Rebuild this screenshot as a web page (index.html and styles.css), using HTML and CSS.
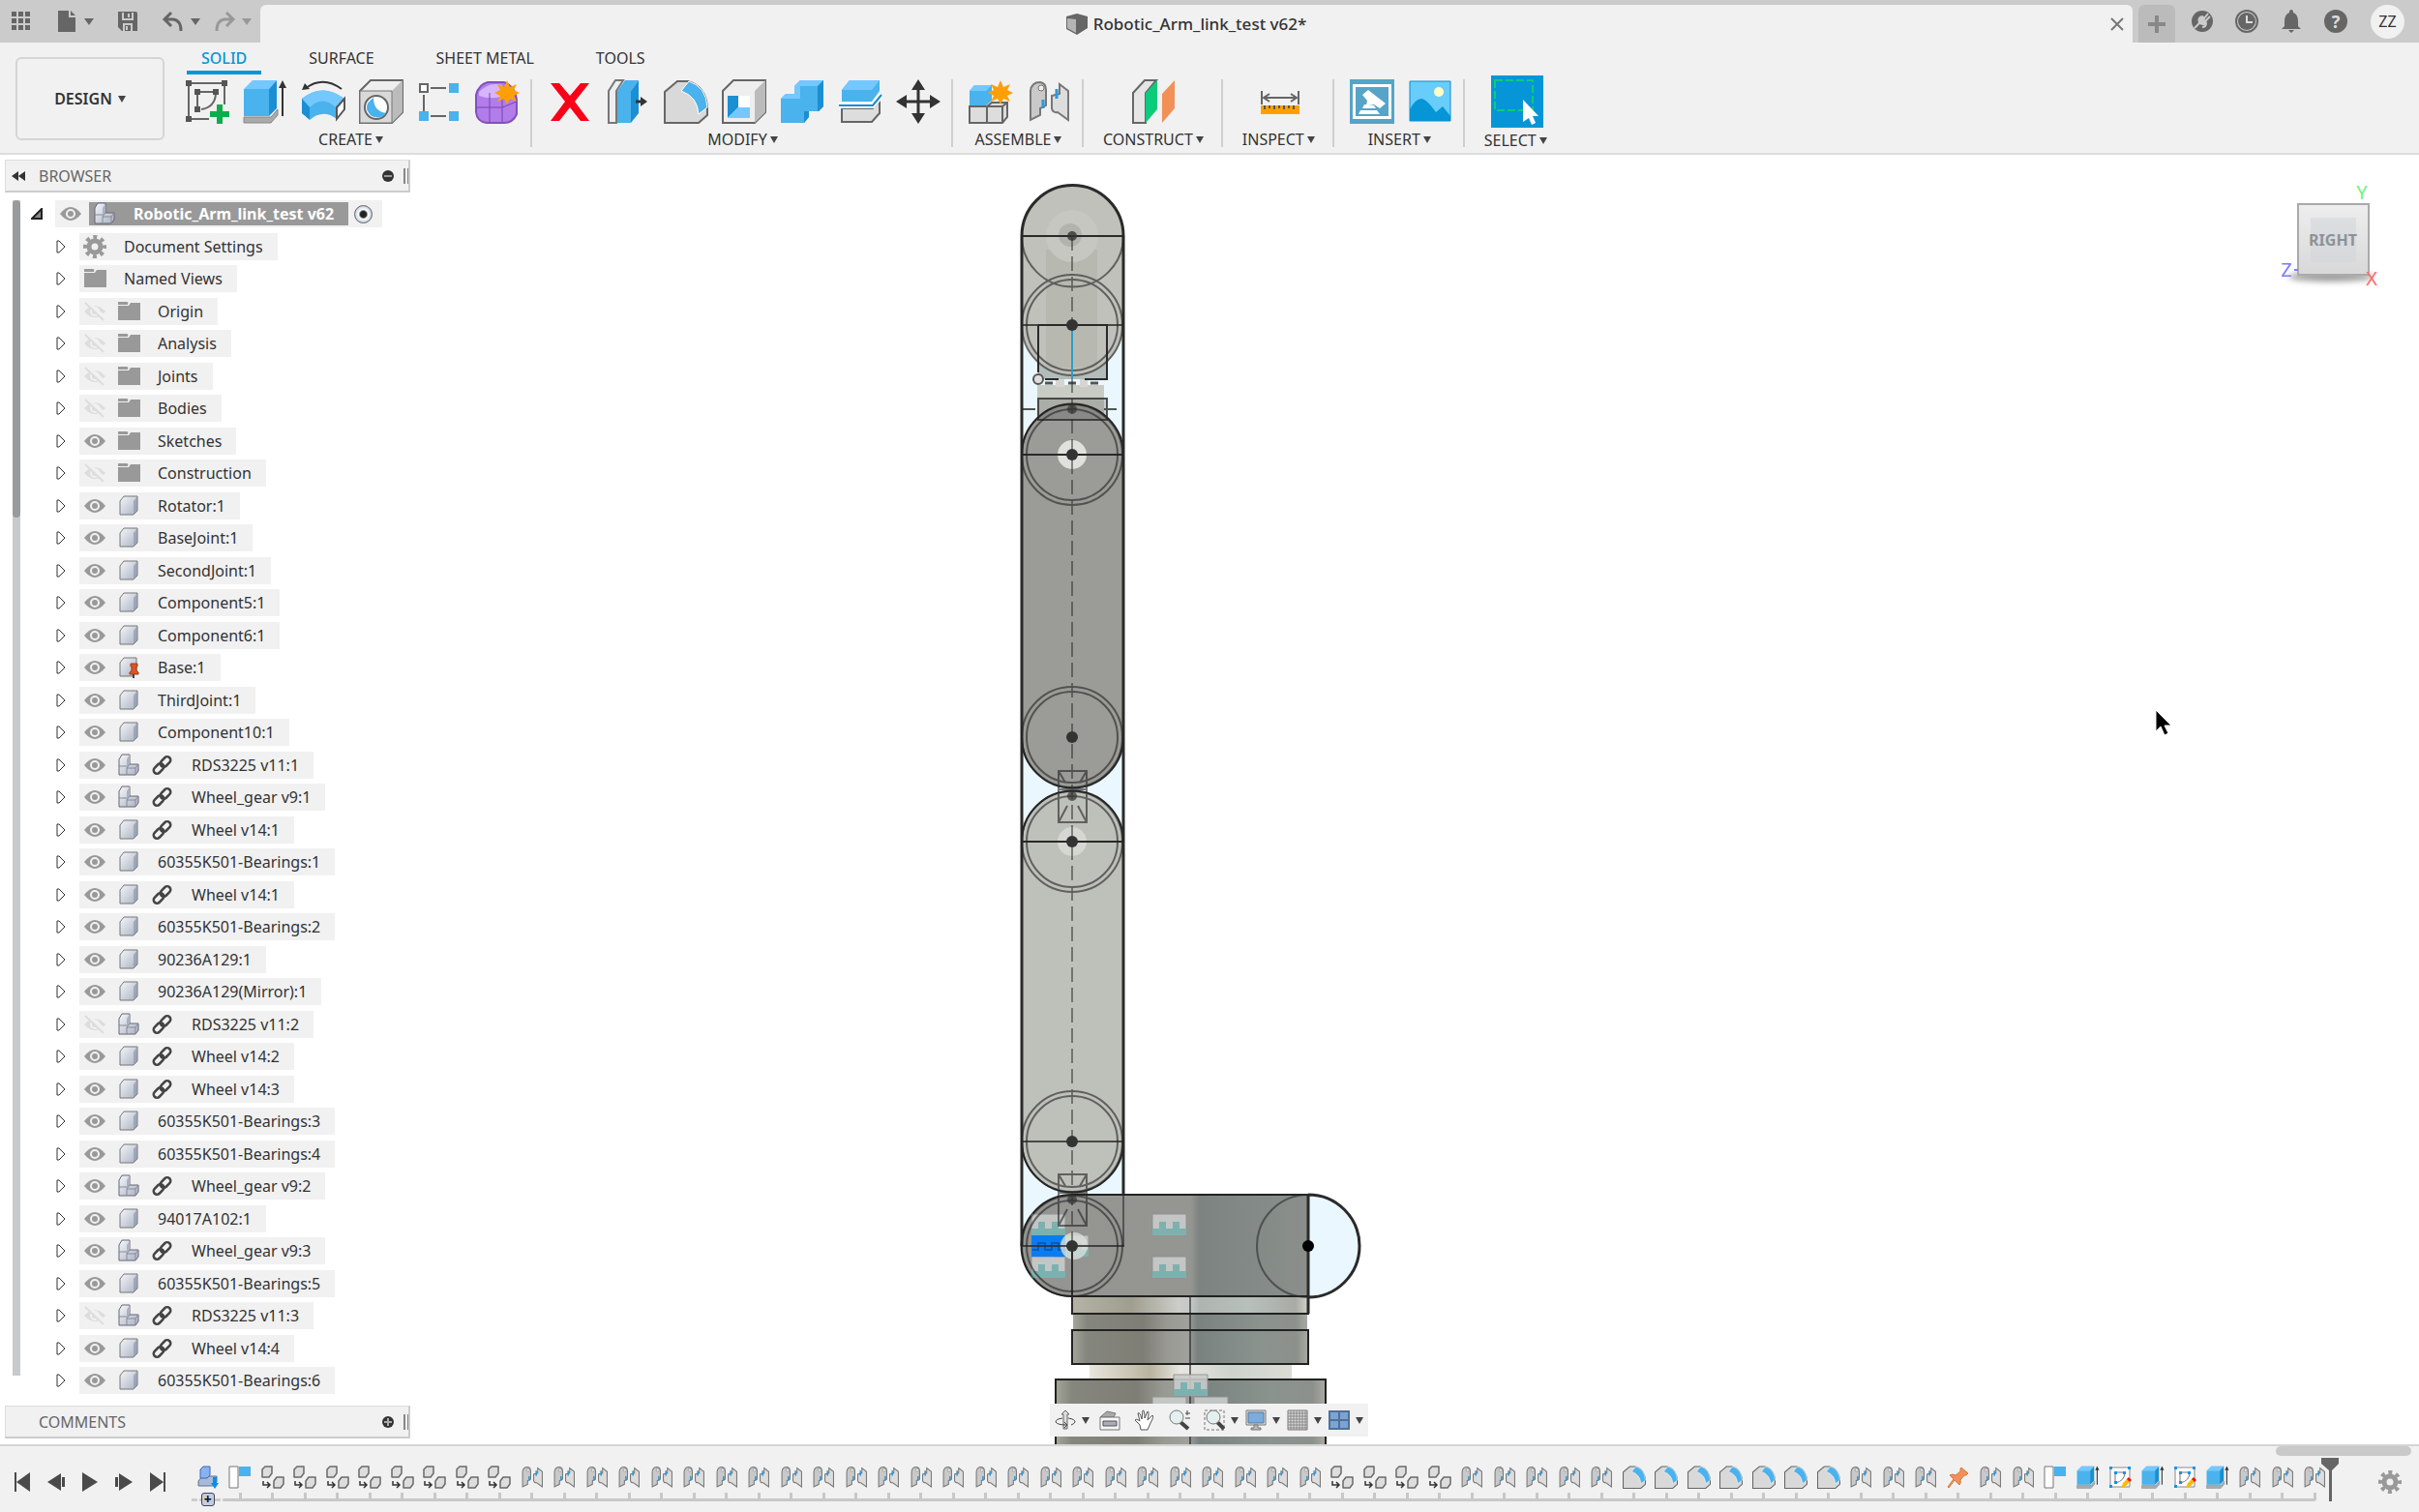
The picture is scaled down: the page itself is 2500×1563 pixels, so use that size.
FILE: index.html
```html
<!DOCTYPE html>
<html lang="en">

<head>
  <meta charset="UTF-8" />
  <meta name="viewport" content="width=device-width, initial-scale=1.0" />
  <title>Robotic_Arm_link_test v62*</title>
  <link rel="stylesheet" href="styles.css">
</head>

<body>
  <!-- shared icons -->
  <svg class="defs" aria-hidden="true">
    <defs>
      <linearGradient id="steel" x1="0" y1="0" x2="1" y2="1">
        <stop offset="0" stop-color="#f4f6f9" />
        <stop offset="1" stop-color="#aab2c3" />
      </linearGradient>
      <linearGradient id="barrel">
        <stop offset="0" stop-color="#a5a699" />
        <stop offset=".06" stop-color="#85867d" />
        <stop offset=".3" stop-color="#7e7e75" />
        <stop offset=".4" stop-color="#989992" />
        <stop offset=".49" stop-color="#a0a19c" />
        <stop offset=".53" stop-color="#7a827f" />
        <stop offset=".8" stop-color="#8b938f" />
        <stop offset=".95" stop-color="#8c908b" />
        <stop offset="1" stop-color="#a9aaa2" />
      </linearGradient>
      <linearGradient id="barrelLight">
        <stop offset="0" stop-color="#b3b2a4" />
        <stop offset=".25" stop-color="#a09e8f" />
        <stop offset=".45" stop-color="#cccdc9" />
        <stop offset=".5" stop-color="#c5c8c9" />
        <stop offset=".54" stop-color="#aeb5b1" />
        <stop offset=".75" stop-color="#b8c0bb" />
        <stop offset=".95" stop-color="#a9aba5" />
        <stop offset="1" stop-color="#cfcfc6" />
      </linearGradient>
      <linearGradient id="neck">
        <stop offset="0" stop-color="#e9e5dc" />
        <stop offset=".3" stop-color="#b9b39f" />
        <stop offset=".45" stop-color="#e8e6e1" />
        <stop offset=".7" stop-color="#cdd3cd" />
        <stop offset="1" stop-color="#dcdcd6" />
      </linearGradient>
      <linearGradient id="shoulder">
        <stop offset="0" stop-color="#949592" />
        <stop offset=".59" stop-color="#959691" />
        <stop offset=".62" stop-color="#7c8381" />
        <stop offset=".9" stop-color="#868d89" />
        <stop offset="1" stop-color="#8b8e8a" />
      </linearGradient>
      <linearGradient id="cubeFace" x1="0" y1="0" x2="0" y2="1">
        <stop offset="0" stop-color="#eeeeee" />
        <stop offset="1" stop-color="#d8d8d8" />
      </linearGradient>
      <filter id="soft" x="-20%" y="-80%" width="140%" height="260%">
        <feGaussianBlur stdDeviation="3" />
      </filter>
    </defs>

    <symbol id="i-eye" viewBox="0 0 24 24">
      <path d="M1 12Q12 -2 23 12Q12 26 1 12Z" fill="#999" />
      <circle cx="12" cy="12" r="4" fill="none" stroke="#f1f1f1" stroke-width="2" />
    </symbol>
    <symbol id="i-hidden" viewBox="0 0 24 24">
      <path d="M1 12Q12 0 23 12Q12 24 1 12Z" fill="#ddd" />
      <circle cx="12" cy="12" r="4" fill="none" stroke="#f1f1f1" stroke-width="2" />
      <path d="M4 2L24 20" stroke="#f1f1f1" stroke-width="4" />
      <path d="M2 3L21 21" stroke="#ddd" stroke-width="2" />
    </symbol>
    <symbol id="i-folder" viewBox="0 0 24 24">
      <path d="M1 2h9q2 0 1 3H1ZM1 6h11l2-3h10v18H1Z" fill="#999" />
    </symbol>
    <symbol id="i-gear" viewBox="0 0 24 24">
      <circle cx="12" cy="12" r="10" fill="none" stroke="#999" stroke-width="4" stroke-dasharray="4 3.85" stroke-dashoffset="2" />
      <circle cx="12" cy="12" r="6" fill="none" stroke="#999" stroke-width="5" />
    </symbol>
    <symbol id="i-body" viewBox="0 0 24 24">
      <path d="M3 7L7 2H21V17L17 21H3Z" fill="url(#steel)" stroke="#777" stroke-linejoin="round" />
      <path d="M17 7L21 2V17L17 21Z" fill="#8f99ab" opacity=".7" />
    </symbol>
    <symbol id="i-assembly" viewBox="0 0 24 24">
      <path d="M2 6L5 1H13V11H22V18L19 22H2Z" fill="url(#steel)" stroke="#667" stroke-linejoin="round" />
      <path d="M10 6L13 1V11L10 15Z" fill="#aab2c3" />
      <path d="M2 13H10M10 22V15L13 11M10 15H19L22 11M19 15V22" fill="none" stroke="#889" />
    </symbol>
    <symbol id="i-pinned" viewBox="0 0 24 24">
      <path d="M3 7L7 2H20V17L16 21H3Z" fill="url(#steel)" stroke="#777" />
      <path d="M14 8h7v3h-1v4l2 2v2h-9v-2l2-2v-4h-1Z" fill="#d9542a" stroke="#a63a18" />
      <path d="M17 19v4" stroke="#444" stroke-width="2" />
    </symbol>
    <symbol id="i-link" viewBox="0 0 24 24">
      <g fill="none" stroke="#444" stroke-width="2.5">
        <rect x="9" y="5" width="12" height="7" rx="3.5" transform="rotate(-45 15 8.5)" />
        <rect x="2" y="12" width="12" height="7" rx="3.5" transform="rotate(-45 8 15.5)" />
      </g>
    </symbol>

    <!-- timeline and toolbar features -->
    <symbol id="i-import" viewBox="0 0 24 24">
      <path d="M2 16L6 11H21V17L17 21H2Z" fill="#a8bad8" stroke="#5f7391" />
      <path d="M4 4L7 1H14V10L11 13H4Z" fill="#8ab2ef" stroke="#3e68b0" />
      <path d="M17 12h4v6h2l-4 6l-4-6h2Z" fill="#0a8cf0" />
    </symbol>
    <symbol id="i-flag" viewBox="0 0 24 24">
      <path d="M1 1H10V23H1Z" fill="#fff" stroke="#777" />
      <path d="M11 1H23V11H11Z" fill="#4ab2ec" />
    </symbol>
    <symbol id="i-pattern" viewBox="0 0 24 24">
      <path d="M1 4L4 1H11V8L8 12H1ZM13 16L16 12H23V19L20 23H13Z" fill="#ddd" stroke="#6a6a6a" stroke-width="1.5" stroke-linejoin="round" />
      <path d="M2 16V20H8M6 17L9 20L6 23" fill="none" stroke="#333" stroke-width="1.5" />
    </symbol>
    <symbol id="i-joint" viewBox="0 0 46 46">
      <path d="M4 42V12Q5 3 14 3Q20 4 20 11V27L14 30V37Z" fill="#c9c9c9" stroke="#777" stroke-width="2" />
      <path d="M43 42V12L34 5V15L26 17V30Q27 35 32 34Z" fill="#ddd" stroke="#777" stroke-width="2" />
      <circle cx="15" cy="9" r="3" fill="#eee" stroke="#777" />
      <path d="M17 30V21M31 20V10" stroke="#2a98e0" stroke-width="3" />
    </symbol>
    <symbol id="i-fillet" viewBox="0 0 46 46">
      <path d="M1 45V13L14 2H25Q44 8 45 30V37L36 45Z" fill="#d9d9d9" stroke="#666" stroke-width="2" />
      <path d="M18 12L26 2Q44 8 45 29L36 36Q35 18 18 12Z" fill="#4ab2ec" stroke="#fff" />
    </symbol>
    <symbol id="i-extrude" viewBox="0 0 46 46">
      <path d="M1 39H29L36 31V37L29 45H1Z" fill="#aaa" stroke="#888" />
      <path d="M1 10L10 1H35L27 10Z" fill="#74c8ff" />
      <path d="M1 10H27V38H1Z" fill="#4ab2ec" />
      <path d="M27 10L35 1V30L27 38Z" fill="#1a8fd3" />
      <path d="M41 38V6" stroke="#333" stroke-width="2" />
      <path d="M37 9L41 1L45 9Z" fill="#333" />
    </symbol>
    <symbol id="i-sketchedit" viewBox="0 0 24 24">
      <path d="M2 2H22V22H2Z" fill="#fff" stroke="#888" />
      <path d="M7 7H17Q17 16 7 18Z" fill="none" stroke="#777" />
      <path d="M1 1h3v3H1ZM20 1h3v3h-3ZM1 20h3v3H1ZM6 6h3v3H6ZM15 6h3v3h-3ZM6 16h3v3H6Z" fill="#0a96ef" />
      <path d="M13 23L15 18L20 13L23 16L17 22Z" fill="#fbb917" />
      <path d="M19 14L21 12L24 15L22 17Z" fill="#e11" />
    </symbol>
    <symbol id="i-pin" viewBox="0 0 24 24">
      <path d="M15 2L22 8L20 10H18L14 15Q15 18 13 20L8 15L2 23L1 22L7 14L3 10Q6 8 9 10L14 6V3Z" fill="#f19157" stroke="#d57a42" />
    </symbol>
  </svg>

  <header class="titlebar">
    <div class="quick">
      <button aria-label="Data panel"><svg width="24" height="24" viewBox="0 0 24 24"><path d="M2 2h5v5H2ZM9 2h5v5H9ZM16 2h5v5h-5ZM2 9h5v5H2ZM9 9h5v5H9ZM16 9h5v5h-5ZM2 16h5v5H2ZM9 16h5v5H9ZM16 16h5v5h-5Z" fill="#666" /></svg></button>
      <button class="drop" aria-label="File"><svg width="24" height="24" viewBox="0 0 24 24"><path d="M3 1H14V8H21V23H3ZM16 1L21 6H16Z" fill="#666" /></svg><i class="caret"></i></button>
      <button aria-label="Save"><svg width="24" height="24" viewBox="0 0 24 24"><path d="M2 2H20Q22 2 22 4V22H6L2 18Z" fill="#666" /><path d="M7 3V10H17V3M8 22V15H16V22M13 4V8M11 17V21" fill="none" stroke="#cbcbcb" stroke-width="2" /></svg></button>
      <button class="drop" aria-label="Undo"><svg width="24" height="24" viewBox="0 0 24 24"><path d="M10 3L3 10L10 17M4 10H12Q20 11 20 22" fill="none" stroke="#666" stroke-width="3" /></svg><i class="caret"></i></button>
      <button class="drop faded" aria-label="Redo"><svg width="24" height="24" viewBox="0 0 24 24"><path d="M14 3L21 10L14 17M20 10H12Q4 11 4 22" fill="none" stroke="#666" stroke-width="3" /></svg><i class="caret"></i></button>
    </div>
    <div class="doc-tab">
      <svg width="24" height="24" viewBox="0 0 24 24"><path d="M1 4L12 1L23 4V16L12 23L1 17Z" fill="#666" /><path d="M2 6L11 7V21L2 16Z" fill="#b5b5b5" /></svg>
      <span>Robotic_Arm_link_test v62*</span>
      <button class="close" aria-label="Close tab"><svg width="14" height="14" viewBox="0 0 14 14"><path d="M1 1L13 13M13 1L1 13" stroke="#777" stroke-width="2" /></svg></button>
    </div>
    <button class="new-tab" aria-label="New tab"><svg width="18" height="18" viewBox="0 0 18 18"><path d="M9 0V18M0 9H18" stroke="#888" stroke-width="4" /></svg></button>
    <nav class="account">
      <button aria-label="Extensions"><svg width="24" height="24" viewBox="0 0 24 24"><circle cx="12" cy="12" r="11" fill="#666" /><path d="M4 19L9 14Q7 8 12 7L14 9L18 4M15 12L20 7M12 18Q16 18 16 14" fill="none" stroke="#cbcbcb" stroke-width="2" /><path d="M9 15Q7 8 12 7L17 13Q16 18 9 15Z" fill="#cbcbcb" /></svg></button>
      <button aria-label="Job status"><svg width="24" height="24" viewBox="0 0 24 24"><circle cx="12" cy="12" r="11" fill="none" stroke="#666" stroke-width="2" /><circle cx="12" cy="12" r="9" fill="#666" /><path d="M12 6V13H18" fill="none" stroke="#ddd" stroke-width="2" /></svg></button>
      <button aria-label="Notifications"><svg width="24" height="24" viewBox="0 0 24 24"><path d="M12 0Q14 0 14 3Q19 5 19 12V17L22 20H2L5 17V12Q5 5 10 3Q10 0 12 0ZM9 21H15L12 24Z" fill="#666" /></svg></button>
      <button class="help" aria-label="Help">?</button>
      <button class="avatar">ZZ</button>
    </nav>
  </header>

  <section class="ribbon">
    <button class="workspace">DESIGN<i class="caret"></i></button>
    <div class="ribbon-body">
      <nav class="tabs">
        <a href="#" class="active">SOLID</a>
        <a href="#">SURFACE</a>
        <a href="#">SHEET METAL</a>
        <a href="#">TOOLS</a>
      </nav>
      <div class="groups">
        <div class="group">
          <div class="tools">
            <button aria-label="Create sketch"><svg viewBox="0 0 46 46"><path d="M7 4H38M4 7V38M41 7V26M7 41H25M12 13H32M13 16V28M32 15Q31 29 17 31" fill="none" stroke="#666" stroke-width="2" /><path d="M1 1h6v6H1ZM38 1h6v6h-6ZM1 38h6v6H1ZM10 10h6v6h-6ZM29 10h6v6h-6ZM10 28h6v6h-6Z" fill="#555" /><path d="M36 26V46M26 36H46" stroke="#0cae4b" stroke-width="6" /></svg></button>
            <button aria-label="Extrude"><svg><use href="#i-extrude" /></svg></button>
            <button aria-label="Revolve"><svg viewBox="0 0 46 46"><path d="M1 20Q22 3 45 20L36 30Q22 20 10 41L1 35Z" fill="#4ab2ec" /><path d="M9 29Q23 16 37 29V41Q23 30 9 42Z" fill="#4ab2ec" /><path d="M1 20Q22 3 45 20L36 29Q22 16 9 29Z" fill="#74c8ff" /><path d="M45 20V31L37 41V29Z" fill="#fff" stroke="#555" stroke-width="2" /><path d="M1 20L9 29V42L1 35Z" fill="#1a8fd3" /><path d="M42 10Q23 -4 5 9" fill="none" stroke="#333" stroke-width="2" /><path d="M1 11L4 4L9 10Z" fill="#333" /></svg></button>
            <button aria-label="Hole"><svg viewBox="0 0 46 46"><path d="M1 12L12 1H45V34L34 45H1Z" fill="#eee" stroke="#666" stroke-width="2" /><path d="M34 12L45 1V34L34 45Z" fill="#bbb" /><path d="M1 12H34V45H1Z" fill="#d9d9d9" stroke="#777" /><circle cx="18" cy="29" r="12" fill="#fff" stroke="#666" stroke-width="2" /><path d="M15 19Q15 33 28 35Q22 42 13 38Q2 28 15 19Z" fill="#4ab2ec" /></svg></button>
            <button aria-label="Pattern"><svg viewBox="0 0 46 46"><path d="M14 9H30M7 16V34M14 38H30" stroke="#666" stroke-width="2" /><path d="M3 5h8v8H3Z" fill="#fff" stroke="#666" stroke-width="2" /><path d="M33 4h10v10H33ZM2 33h10v10H2ZM33 33h10v10H33Z" fill="#4ab2ec" /></svg></button>
            <button aria-label="Create form"><svg viewBox="0 0 46 46"><path d="M1 16Q4 5 13 3H30Q42 8 43 22V36Q39 45 30 45H12Q2 44 1 34Z" fill="#b27de9" stroke="#8050c0" stroke-width="2" /><path d="M4 13Q16 2 28 6L27 18Q15 21 4 17Z" fill="#d7b5fb" /><path d="M1 29H28L43 23M15 14V45M28 18V44" fill="none" stroke="#7745b8" /><path d="M33 1L36 8L43 5L40 11L46 14L40 17L43 23L36 20L33 26L30 20L23 23L26 17L20 14L26 11L23 5L30 8Z" fill="#ff9f06" /></svg></button>
          </div>
          <button class="group-name">CREATE<i class="caret"></i></button>
        </div>
        <div class="group">
          <div class="tools">
            <button aria-label="Delete"><svg viewBox="0 0 46 46"><path d="M3 4H12L23 17L34 4H43L28 23L43 43H34L23 29L12 43H3L18 23Z" fill="#fa0019" /></svg></button>
            <button aria-label="Press pull"><svg viewBox="0 0 46 46"><path d="M3 12L10 1H18L11 12V45H3Z" fill="#eee" stroke="#777" stroke-width="2" /><path d="M12 12L20 1H34L26 12V45H12Z" fill="#4ab2ec" /><path d="M26 12L34 1V35L26 45Z" fill="#1a8fd3" /><path d="M31 23H38" stroke="#333" stroke-width="3" /><path d="M36 18L43 23L36 28Z" fill="#333" /></svg></button>
            <button aria-label="Fillet"><svg><use href="#i-fillet" /></svg></button>
            <button aria-label="Shell"><svg viewBox="0 0 46 46"><path d="M1 12L12 1H45V34L34 45H1Z" fill="#eee" stroke="#666" stroke-width="2" /><path d="M34 12L45 1V34L34 45Z" fill="#bbb" /><path d="M6 17H29V40H6Z" fill="#fff" /><path d="M6 17H17V29L6 40Z" fill="#1a8fd3" /><path d="M6 40L17 29H29V40Z" fill="#74c8ff" /></svg></button>
            <button aria-label="Combine"><svg viewBox="0 0 46 46"><path d="M1 20L6 15H15V7L21 1H45V28L40 33H30V39L25 45H1Z" fill="#4ab2ec" /><path d="M1 20L6 15H15V7L21 1H45L39 7H21V20Z" fill="#74c8ff" /><path d="M39 7L45 1V28L40 33H30V39L25 45V33H39Z" fill="#1a8fd3" /></svg></button>
            <button aria-label="Split body"><svg viewBox="0 0 46 46"><path d="M4 30H36L43 22V35L35 44H4Z" fill="#ddd" stroke="#666" stroke-width="2" /><path d="M4 11L12 1H43V12L35 23H4Z" fill="#4ab2ec" /><path d="M4 11L12 1H43L35 11Z" fill="#74c8ff" /><path d="M1 27H36L45 16" fill="none" stroke="#fff" stroke-width="6" /><path d="M1 27H36L45 16" fill="none" stroke="#128bd8" stroke-width="2" /></svg></button>
            <button aria-label="Move"><svg viewBox="0 0 46 46"><path d="M23 7V39M7 23H39" stroke="#333" stroke-width="3" /><path d="M23 0L30 11H16ZM23 46L30 35H16ZM0 23L11 16V30ZM46 23L35 16V30Z" fill="#333" /></svg></button>
          </div>
          <button class="group-name">MODIFY<i class="caret"></i></button>
        </div>
        <div class="group">
          <div class="tools">
            <button aria-label="New component"><svg viewBox="0 0 46 46"><path d="M1 28H19V45H1ZM19 28L24 24H40V39L35 45H19Z" fill="#ddd" stroke="#666" stroke-width="2" /><path d="M35 28V45M19 28H35L40 24" fill="none" stroke="#666" stroke-width="2" /><path d="M1 12L6 6H24V22L18 27H1Z" fill="#4ab2ec" /><path d="M1 12L6 6H24L18 12Z" fill="#74c8ff" /><path d="M33 1L36 8L43 5L40 11L46 14L40 17L43 23L36 20L33 26L30 20L23 23L26 17L20 14L26 11L23 5L30 8Z" fill="#ff9f06" /></svg></button>
            <button aria-label="Joint"><svg><use href="#i-joint" /></svg></button>
          </div>
          <button class="group-name">ASSEMBLE<i class="caret"></i></button>
        </div>
        <div class="group">
          <div class="tools">
            <button aria-label="Offset plane"><svg viewBox="0 0 46 46"><path d="M1 14L13 1H25L14 14V45H1Z" fill="#e5e5e5" stroke="#666" stroke-width="2" /><path d="M14 14L26 1V31L14 45Z" fill="#0ccc7c" /><path d="M31 15L44 1V30L31 45Z" fill="#f19157" /></svg></button>
          </div>
          <button class="group-name">CONSTRUCT<i class="caret"></i></button>
        </div>
        <div class="group">
          <div class="tools">
            <button aria-label="Measure"><svg viewBox="0 0 46 46"><path d="M4 12V26M42 12V26M7 19H39M12 15L6 19L12 23M34 15L40 19L34 23" fill="none" stroke="#666" stroke-width="2" /><path d="M3 27H43V36H3Z" fill="#ffa000" /><path d="M7 27v4M12 27v3M17 27v4M22 27v3M27 27v4M32 27v3M37 27v4" stroke="#555" stroke-width="2" /></svg></button>
          </div>
          <button class="group-name">INSPECT<i class="caret"></i></button>
        </div>
        <div class="group">
          <div class="tools">
            <button aria-label="Insert derive"><svg viewBox="0 0 46 46"><path d="M0 0H46V46H0Z" fill="#56a4c8" /><path d="M3 5H43V41H3Z" fill="#fff" /><path d="M6 8H40V38H6Z" fill="#56a4c8" /><path d="M13 16L19 11L37 25L31 30L25 26L17 27L18 22ZM15 26L25 27L27 30H13ZM11 32H28L31 36H9Z" fill="#fff" /></svg></button>
            <button aria-label="Canvas"><svg viewBox="0 0 46 46"><path d="M2 2H44V43H2Z" fill="#69cdfb" /><path d="M2 31Q8 20 14 20Q19 20 29 34L36 28L44 38V43H2Z" fill="#0696d7" /><circle cx="32" cy="13" r="5" fill="#ffffc5" /><path d="M2 2H44V43H2Z" fill="none" stroke="#0b8ed0" /></svg></button>
          </div>
          <button class="group-name">INSERT<i class="caret"></i></button>
        </div>
        <div class="group">
          <div class="tools">
            <button class="selected" aria-label="Select"><svg viewBox="0 0 54 54"><path d="M4 5H43V36H4Z" fill="none" stroke="#0bcb7d" stroke-width="2" stroke-dasharray="8 3" /><path d="M33 25V48L39 44L42 51L46 49L43 42H49Z" fill="#fff" /></svg></button>
          </div>
          <button class="group-name">SELECT<i class="caret"></i></button>
        </div>
      </div>
    </div>
  </section>

  <main class="viewport">
    <svg class="model" viewBox="0 160 2500 1333" preserveAspectRatio="xMidYMin meet">
      <!-- base -->
      <path d="M1091 1426H1370V1493H1091Z" fill="url(#barrel)" />
      <path d="M1126 1411H1335V1427H1126Z" fill="url(#neck)" />
      <path d="M1109 1340H1351V1358H1109Z" fill="url(#barrelLight)" />
      <path d="M1109 1358H1351V1375H1109Z" fill="url(#barrel)" />
      <path d="M1108 1375H1352V1411H1108Z" fill="url(#barrel)" />
      <g fill="none" stroke="#222" stroke-width="2">
        <path d="M1091 1493V1426H1370V1493M1108 1340V1358H1352V1340M1108 1375H1352V1410H1108Z" />
        <path d="M1230 1340V1493" opacity=".6" />
      </g>

      <!-- sketch profiles -->
      <path d="M1056 336H1161V470H1056ZM1056 762H1161V870H1056ZM1056 1180H1161V1288H1056Z" fill="#eaf7fe" />
      <circle cx="1352" cy="1288" r="53" fill="#eaf7fe" />
      <path d="M1108 1235H1352V1340H1108A52 52 0 0 1 1108 1235Z" fill="url(#shoulder)" stroke="#222" stroke-width="2" />

      <!-- servo between the wrist links -->
      <path d="M1073 350H1144V392H1073Z" fill="#b3bcba" />
      <path d="M1072 398H1141V434H1072Z" fill="#c9ccc4" />
      <path d="M1091 392H1100V400H1091ZM1116 392H1124V400H1116Z" fill="#d5d6d2" />
      <path d="M1080 396H1088M1104 396H1112M1127 396H1135" stroke="#555" stroke-width="3" />

      <!-- links -->
      <path d="M1056 244A52 52 0 0 1 1161 244V336A52 52 0 0 1 1056 336Z" fill="#c0c1ba" />
      <path d="M1081 258H1134V380H1081Z" fill="#b4b5ae" opacity=".7" />
      <circle cx="1108" cy="244" r="27" fill="#c6c7c1" />
      <circle cx="1106" cy="243" r="12" fill="#b2b3ac" />
      <path d="M1056 470A52 52 0 0 1 1161 470V762A52 52 0 0 1 1056 762Z" fill="#9b9c97" />
      <path d="M1056 870A52 52 0 0 1 1161 870V1180A52 52 0 0 1 1056 1180Z" fill="#bec0ba" />
      <path d="M1073 412H1144V434H1073Z" fill="#555" opacity=".25" />
      <g fill="#e0e1dd">
        <circle cx="1108" cy="470" r="15" />
        <circle cx="1108" cy="870" r="15" opacity=".7" />
      </g>

      <!-- joint glyphs -->
      <g id="joints"></g>
      <circle cx="1110" cy="1288" r="14" fill="#d9dedb" opacity=".8" />

      <!-- edges -->
      <g fill="none" stroke="#2a2a2a" stroke-width="2">
        <path d="M1056 1288V244A52 52 0 0 1 1161 244V1235" stroke-width="3" />
        <path d="M1161 1235V1288" opacity=".6" />
        <path d="M1056 470A52 52 0 0 1 1161 470M1056 762A52 52 0 0 0 1161 762M1056 870A52 52 0 0 1 1161 870M1056 1180A52 52 0 0 0 1161 1180" />
        <path d="M1056 244H1161M1056 470H1161M1056 870H1161" />
        <path d="M1055 336H1162M1055 1180H1162M1055 1288H1162" opacity=".8" />
        <path d="M1073 336H1144V392H1121M1073 336V385M1080 392H1094" />
        <path d="M1073 412H1144V434H1073ZM1057 423H1070M1141 423H1154" opacity=".8" />
        <path d="M1352 1235V1358M1352 1235A53 53 0 0 1 1352 1341" stroke-width="3" />
        <path d="M1352 1235A53 53 0 0 0 1352 1341" opacity=".6" />
        <path d="M1108 1288V1358" />
      </g>
      <g fill="none" stroke="#222" stroke-width="2" opacity=".6">
        <path d="M1056 244A52 52 0 0 0 1161 244" />
        <circle cx="1108" cy="336" r="52" /><circle cx="1108" cy="336" r="47" />
        <circle cx="1108" cy="470" r="52" /><circle cx="1108" cy="470" r="47" />
        <circle cx="1108" cy="762" r="52" /><circle cx="1108" cy="762" r="47" />
        <circle cx="1108" cy="870" r="52" /><circle cx="1108" cy="870" r="47" />
        <circle cx="1108" cy="1180" r="52" /><circle cx="1108" cy="1180" r="47" />
        <circle cx="1108" cy="1288" r="52" /><circle cx="1108" cy="1288" r="47" />
        <path d="M1094 797H1123V850H1094ZM1094 797L1101 809M1123 797L1116 809M1094 850L1103 833M1123 850L1114 833M1094 816H1123" />
        <path d="M1094 1214H1123V1267H1094ZM1094 1214L1101 1226M1123 1214L1116 1226M1094 1267L1103 1250M1123 1267L1114 1250M1094 1233H1123" />
        <path d="M1108 244V1288" stroke-dasharray="15 6" opacity=".8" />
      </g>
      <path d="M1108 342V392" stroke="#2b9fc4" stroke-width="2" />
      <g fill="#333">
        <circle cx="1108" cy="244" r="5" opacity=".8" />
        <circle cx="1108" cy="336" r="6" />
        <circle cx="1108" cy="423" r="5" opacity=".7" />
        <circle cx="1108" cy="470" r="6" />
        <circle cx="1108" cy="762" r="6" />
        <circle cx="1108" cy="823" r="5" opacity=".7" />
        <circle cx="1108" cy="870" r="6" />
        <circle cx="1108" cy="1180" r="6" />
        <circle cx="1108" cy="1240" r="5" opacity=".7" />
        <circle cx="1108" cy="1288" r="6" />
        <circle cx="1352" cy="1288" r="6" fill="#000" />
      </g>
      <circle cx="1073" cy="392" r="5" fill="#ddd" stroke="#555" stroke-width="2" />

      <!-- view cube -->
      <ellipse cx="2409" cy="286" rx="44" ry="5" fill="#999" filter="url(#soft)" />
      <path d="M2375 211H2448V284H2375Z" fill="url(#cubeFace)" stroke="#aaa" stroke-width="2" />
      <path d="M2388 225H2435V271H2388Z" fill="#d3d6da" opacity=".6" />
      <text class="cube-label" x="2411" y="254">RIGHT</text>
      <text class="axis-y" x="2441" y="206">Y</text>
      <text class="axis-z" x="2363" y="286">Z</text>
      <text class="axis-x" x="2451" y="295">X</text>
      <path d="M2371 279H2375" stroke="#8080ff" stroke-width="2" />

      <!-- pointer -->
      <path d="M2228 734V756L2233 751L2237 760L2241 758L2237 750H2244Z" fill="#000" stroke="#fff" />
    </svg>

    <aside class="browser">
      <div class="panel-head">
        <button aria-label="Collapse"><svg width="14" height="10" viewBox="0 0 14 10"><path d="M7 0V10L0 5ZM14 0V10L7 5Z" fill="#333" /></svg></button>
        <h2>BROWSER</h2>
        <button aria-label="Hide"><svg width="12" height="12" viewBox="0 0 12 12"><circle cx="6" cy="6" r="6" fill="#333" /><path d="M2 6H10" stroke="#999" stroke-width="2" /></svg></button>
        <i class="grip"></i>
      </div>
      <div class="tree-wrap">
        <div class="scroll"><div class="thumb"></div></div>
        <ul class="tree" id="tree">
          <li class="root">
            <button class="twist" aria-label="Collapse root"><svg width="12" height="12" viewBox="0 0 12 12"><path d="M1 11H11V1Z" fill="#888" stroke="#222" stroke-width="2" /></svg></button>
            <div class="tile">
              <svg class="ico"><use href="#i-eye" /></svg>
              <span class="root-name"><svg class="ico"><use href="#i-assembly" /></svg>Robotic_Arm_link_test v62</span>
              <input type="radio" name="activate" aria-label="Activate component" checked />
            </div>
          </li>
        </ul>
      </div>
      <div class="panel-head comments">
        <h2>COMMENTS</h2>
        <button aria-label="Show"><svg width="12" height="12" viewBox="0 0 12 12"><circle cx="6" cy="6" r="6" fill="#333" /><path d="M2 6H10M6 2V10" stroke="#aaa" stroke-width="2" /></svg></button>
        <i class="grip"></i>
      </div>
    </aside>

    <div class="navbar">
      <button class="drop" aria-label="Orbit"><svg viewBox="0 0 22 22"><path d="M11 1L15 5H13V20H9V5H7Z" fill="#ddd" stroke="#666" /><path d="M8 9Q1 10 1 13Q3 16 12 16M14 9Q21 10 21 13Q20 15 17 16M10 13L13 16L10 19" fill="none" stroke="#444" /></svg><i class="caret"></i></button>
      <button aria-label="Look at"><svg viewBox="0 0 22 22"><path d="M1 8L8 2L17 4L15 8Z" fill="#aaa" stroke="#777" /><path d="M1 8H21V21H1Z" fill="#f6f6f6" stroke="#777" /><path d="M4 12H18V17H4Z" fill="#a9adb8" stroke="#555" /></svg></button>
      <button aria-label="Pan"><svg viewBox="0 0 22 22"><path d="M7 21L6 16L1 11Q2 9 6 12L4 4Q6 2 8 10L9 1Q11 0 11 9L14 2Q16 2 14 11L19 6Q21 7 17 14L14 21Z" fill="#fff" stroke="#555" /></svg></button>
      <button aria-label="Zoom"><svg viewBox="0 0 22 22"><path d="M12 13L20 20" stroke="#444" stroke-width="4" /><circle cx="8" cy="8" r="7" fill="#e4efef" stroke="#777" /><path d="M17 4H22M19 1V6M17 9H22" stroke="#444" /></svg></button>
      <button class="drop" aria-label="Fit"><svg viewBox="0 0 22 22"><path d="M1 1H21V21H1Z" fill="none" stroke="#777" stroke-dasharray="3 2" /><path d="M14 13L21 20" stroke="#444" stroke-width="4" /><circle cx="10" cy="8" r="7" fill="#e4efef" stroke="#777" /></svg><i class="caret"></i></button>
      <button class="drop" aria-label="Display settings"><svg viewBox="0 0 22 22"><path d="M1 1H21V16H1Z" fill="#e2e2e2" stroke="#777" /><path d="M3 3H19V14H3Z" fill="#7cacdb" stroke="#55779b" /><path d="M9 16H13V19H16V21H6V19H9Z" fill="#bbb" stroke="#777" /></svg><i class="caret"></i></button>
      <button class="drop" aria-label="Grid and snaps"><svg viewBox="0 0 22 22"><path d="M1 1H21V21H1Z" fill="#ddd" stroke="#777" /><path d="M4 1V21M7 1V21M10 1V21M13 1V21M16 1V21M19 1V21M1 4H21M1 7H21M1 10H21M1 13H21M1 16H21M1 19H21" stroke="#888" /></svg><i class="caret"></i></button>
      <button class="drop" aria-label="Viewports"><svg viewBox="0 0 22 22"><path d="M1 2H21V20H1Z" fill="#7ba4d2" stroke="#4f7099" stroke-width="2" /><path d="M11 2V20M1 11H21" stroke="#4f7099" stroke-width="2" /></svg><i class="caret"></i></button>
    </div>
  </main>

  <footer class="timeline">
    <div class="playback">
      <button aria-label="Start"><svg viewBox="0 0 20 20"><path d="M2 0H4V20H2ZM18 0V20L4 10Z" fill="#4a4a4a" /></svg></button>
      <button aria-label="Step back"><svg viewBox="0 0 20 20"><path d="M15 1V19L1 10ZM16 5H19V15H16Z" fill="#4a4a4a" /></svg></button>
      <button aria-label="Play"><svg viewBox="0 0 20 20"><path d="M2 0L18 10L2 20Z" fill="#4a4a4a" /></svg></button>
      <button aria-label="Step forward"><svg viewBox="0 0 20 20"><path d="M5 1V19L19 10ZM1 5H4V15H1Z" fill="#4a4a4a" /></svg></button>
      <button aria-label="End"><svg viewBox="0 0 20 20"><path d="M2 0V20L16 10ZM16 0H18V20H16Z" fill="#4a4a4a" /></svg></button>
    </div>
    <ol class="features" id="features"></ol>
    <div class="timeline-end">
      <div class="hscroll"></div>
      <svg class="marker" width="18" height="45" viewBox="0 0 18 45"><path d="M0 0H18V6L11 13V45H8V13L0 6Z" fill="#666" /></svg>
      <button aria-label="Timeline settings"><svg width="24" height="24"><use href="#i-gear" /></svg></button>
    </div>
  </footer>

  <script>
    // name, icon, visibility, linked
    const nodes = [
      ['Document Settings', 'gear', 'none'],
      ['Named Views', 'folder', 'none'],
      ['Origin', 'folder', 'off'],
      ['Analysis', 'folder', 'off'],
      ['Joints', 'folder', 'off'],
      ['Bodies', 'folder', 'off'],
      ['Sketches', 'folder', 'on'],
      ['Construction', 'folder', 'off'],
      ['Rotator:1', 'body', 'on'],
      ['BaseJoint:1', 'body', 'on'],
      ['SecondJoint:1', 'body', 'on'],
      ['Component5:1', 'body', 'on'],
      ['Component6:1', 'body', 'on'],
      ['Base:1', 'pinned', 'on'],
      ['ThirdJoint:1', 'body', 'on'],
      ['Component10:1', 'body', 'on'],
      ['RDS3225 v11:1', 'assembly', 'on', true],
      ['Wheel_gear v9:1', 'assembly', 'on', true],
      ['Wheel v14:1', 'body', 'on', true],
      ['60355K501-Bearings:1', 'body', 'on'],
      ['Wheel v14:1', 'body', 'on', true],
      ['60355K501-Bearings:2', 'body', 'on'],
      ['90236A129:1', 'body', 'on'],
      ['90236A129(Mirror):1', 'body', 'on'],
      ['RDS3225 v11:2', 'assembly', 'off', true],
      ['Wheel v14:2', 'body', 'on', true],
      ['Wheel v14:3', 'body', 'on', true],
      ['60355K501-Bearings:3', 'body', 'on'],
      ['60355K501-Bearings:4', 'body', 'on'],
      ['Wheel_gear v9:2', 'assembly', 'on', true],
      ['94017A102:1', 'body', 'on'],
      ['Wheel_gear v9:3', 'assembly', 'on', true],
      ['60355K501-Bearings:5', 'body', 'on'],
      ['RDS3225 v11:3', 'assembly', 'off', true],
      ['Wheel v14:4', 'body', 'on', true],
      ['60355K501-Bearings:6', 'body', 'on']
    ];

    const icon = (name) => `<svg class="ico"><use href="#i-${name}" /></svg>`;

    document.getElementById('tree').insertAdjacentHTML('beforeend', nodes.map(([name, type, eye, linked]) => `
      <li>
        <button class="twist" aria-label="Expand ${name}"><svg width="10" height="14" viewBox="0 0 10 14"><path d="M1 1V13H3L9 7L3 1Z" fill="#fff" stroke="#333" /></svg></button>
        <div class="tile">
          ${eye === 'none' ? '' : icon(eye === 'on' ? 'eye' : 'hidden')}${icon(type)}${linked ? icon('link') : ''}
          <span>${name}</span>
        </div>
      </li>`).join(''));

    // runs of features along the timeline
    const runs = [
      ['import', 1], ['flag', 1], ['pattern', 8], ['joint', 25], ['pattern', 4],
      ['joint', 5], ['fillet', 7], ['joint', 3], ['pin', 1], ['joint', 2],
      ['flag', 1], ['extrude', 1], ['sketchedit', 1], ['extrude', 1],
      ['sketchedit', 1], ['extrude', 1], ['joint', 3]
    ];

    const features = document.getElementById('features');
    runs.forEach(([type, count]) => {
      for (let i = 0; i < count; i++) {
        features.insertAdjacentHTML('beforeend',
          `<li>${icon(type)}${type === 'import' ? '<button class="expand" aria-label="Expand group">+</button>' : ''}</li>`);
      }
    });

    // rigid joint glyphs on the model
    const glyphs = [
      [1066, 1255], [1066, 1299], [1090, 1277], [1191, 1255], [1191, 1299],
      [1213, 1421], [1191, 1444], [1234, 1444]
    ];
    document.getElementById('joints').innerHTML = glyphs.map(([x, y]) => `
      <g transform="translate(${x} ${y})">
        <path d="M0 0H35V22H0Z" fill="#c9ccca" stroke="#8d9391" opacity=".9" />
        <path d="M0 15H7V8H14V15H21V8H28V15H35V22H0Z" fill="#7db1af" />
      </g>`).join('') + `
      <g transform="translate(1066 1277)">
        <path d="M0 0H35V22H0Z" fill="#0a7cf2" />
        <path d="M1 15H7V8H14V15H21V8H28V15H35" fill="none" stroke="#0a5bb4" stroke-width="2" />
      </g>`;
  </script>
</body>

</html>
```
FILE: styles.css
```css
* {
  box-sizing: border-box;
}

body {
  margin: 0;
  height: 100vh;
  display: flex;
  flex-direction: column;
  font-family: "Noto Sans", "Open Sans", sans-serif;
  font-size: 16px;
  color: #333;
  background: #fff;
  overflow: hidden;
}

button {
  display: flex;
  align-items: center;
  justify-content: center;
  margin: 0;
  padding: 0;
  border: 0;
  background: none;
  font: inherit;
  color: inherit;
  cursor: pointer;
}

svg {
  display: block;
  flex: none;
}

ul,
ol {
  margin: 0;
  padding: 0;
  list-style: none;
}

.defs {
  position: absolute;
  width: 0;
  height: 0;
}

.caret {
  width: 0;
  height: 0;
  border: 4px solid transparent;
  border-top: 7px solid #444;
  border-bottom: 0;
}

.ico {
  width: 24px;
  height: 24px;
}

/* title bar */
.titlebar {
  display: flex;
  flex: none;
  height: 44px;
  padding-top: 5px;
  background: #cbcbcb;
}

.quick {
  display: flex;
  align-items: center;
  width: 269px;
  padding: 0 9px 5px 10px;
  gap: 23px;
}

.quick .drop {
  gap: 6px;
}

.quick .caret {
  border-width: 7px 5px 0;
  border-top-color: #666;
}

.quick .drop + .drop {
  margin-left: -10px;
}

.faded {
  opacity: .5;
}

.doc-tab {
  position: relative;
  display: flex;
  flex: 1;
  align-items: center;
  justify-content: center;
  gap: 5px;
  padding-right: 22px;
  border-radius: 6px 6px 0 0;
  background: #f1f1f1;
  font-size: 17px;
  font-weight: 500;
}

.close {
  position: absolute;
  right: 9px;
}

.new-tab {
  width: 38px;
  margin-left: 6px;
  border-radius: 6px 6px 0 0;
  background: #bbb;
}

.account {
  display: flex;
  align-items: center;
  gap: 22px;
  padding: 0 15px 5px 16px;
}

.help {
  width: 24px;
  height: 24px;
  border-radius: 50%;
  background: #666;
  color: #ddd;
  font-size: 18px;
  font-weight: bold;
}

.avatar {
  width: 35px;
  height: 35px;
  border-radius: 50%;
  background: #f1f1f1;
  margin-left: 2px;
}

/* ribbon */
.ribbon {
  display: flex;
  flex: none;
  height: 116px;
  border-bottom: 2px solid #ddd;
  background: #f1f1f1;
}

.workspace {
  width: 154px;
  height: 86px;
  margin: 15px 14px 0 16px;
  gap: 6px;
  border: 2px solid #d5d5d5;
  border-radius: 6px;
  font-weight: 600;
}

.ribbon-body {
  flex: 1;
}

.tabs {
  display: flex;
  gap: 34px;
  height: 33px;
  padding-left: 9px;
}

.tabs a {
  padding: 5px 15px 0;
  line-height: 22px;
  color: #333;
  text-decoration: none;
}

.tabs .active {
  color: #0696d7;
  border-bottom: 4px solid #0696d7;
  font-weight: 500;
}

.groups {
  display: flex;
  padding-top: 1px;
}

.group {
  display: flex;
  flex-direction: column;
  align-items: center;
  height: 76px;
  padding: 0 6px 0 9px;
  background: linear-gradient(#cfcfcf, #cfcfcf) right 4px / 2px 70px no-repeat;
}

.group:first-child {
  padding-left: 0;
}

.group:last-child {
  background: none;
}

.tools {
  display: flex;
  height: 54px;
}

.tools button {
  width: 60px;
}

.tools svg {
  width: 46px;
  height: 46px;
}

.tools .selected {
  width: 54px;
  background: #0696d7;
}

.selected svg {
  width: 54px;
  height: 54px;
}

.group-name {
  gap: 3px;
  padding: 3px 14px 0 11px;
  line-height: 20px;
}

/* viewport */
.viewport {
  position: relative;
  flex: 1;
  min-height: 0;
}

.model {
  position: absolute;
  width: 100%;
  height: 100%;
}

.cube-label {
  font: bold 16px "Noto Sans", sans-serif;
  fill: #8b9298;
  text-anchor: middle;
}

.axis-x,
.axis-y,
.axis-z {
  font-size: 20px;
  text-anchor: middle;
}

.axis-x {
  fill: #ff6b6b;
}

.axis-y {
  fill: #6bf57b;
}

.axis-z {
  fill: #7d7dff;
}

/* browser panel */
.browser {
  position: relative;
  display: flex;
  flex-direction: column;
  width: 424px;
  height: 100%;
  padding: 5px 0 6px 5px;
}

.panel-head {
  display: flex;
  flex: none;
  align-items: center;
  height: 34px;
  padding-left: 6px;
  border: 1px solid #ddd;
  border-right: 2px solid #ccc;
  border-bottom: 2px solid #ccc;
  background: #f1f1f1;
}

.panel-head h2 {
  flex: 1;
  margin: 0 0 0 14px;
  font-size: 16px;
  font-weight: normal;
  color: #666;
}

.comments {
  padding-left: 20px;
}

.grip {
  width: 5px;
  height: 16px;
  margin-left: 10px;
  border: solid #888;
  border-width: 0 1px 0 2px;
}

.tree-wrap {
  display: flex;
  flex: 1;
  min-height: 0;
  padding: 8px 0 13px 8px;
}

.scroll {
  width: 8px;
  margin-bottom: 18px;
  background: #c8c9cb;
}

.thumb {
  height: 27%;
  border-radius: 4px;
  background: #999a9c;
}

.tree {
  flex: 1;
}

.tree li {
  display: flex;
  align-items: center;
  height: 28px;
  margin-bottom: 6px;
  padding-left: 37px;
}

.tree li:nth-child(even) {
  margin-bottom: 5px;
}

.twist {
  width: 10px;
  margin-right: 14px;
}

.tile {
  display: flex;
  align-items: center;
  gap: 11px;
  height: 28px;
  padding: 0 15px 0 4px;
  background: #f1f1f1;
}

.tile span {
  margin-left: 7px;
  line-height: 24px;
  white-space: nowrap;
}

.tree .root {
  padding-left: 11px;
}

.root .twist {
  width: 12px;
  margin-right: 13px;
}

.tile .root-name {
  display: flex;
  gap: 18px;
  height: 24px;
  margin-left: -4px;
  padding: 0 15px 0 4px;
  background: #999;
  color: #fff;
  font-weight: bold;
}

.root .tile {
  padding-right: 10px;
}

.root input {
  appearance: none;
  width: 19px;
  height: 19px;
  margin: 0 0 0 -5px;
  border: 1px solid #666;
  border-radius: 50%;
  background: radial-gradient(#222 3px, #fff 5px, #b9c6dc 9px);
}

/* view controls */
.navbar {
  position: absolute;
  left: 1085px;
  bottom: 8px;
  display: flex;
  align-items: center;
  gap: 14px;
  height: 34px;
  padding: 0 5px;
  background: #f1f1f1;
}

.navbar .drop {
  gap: 6px;
}

.navbar .drop + .drop {
  margin-left: -7px;
}

.navbar .drop:first-child {
  margin-right: -4px;
}

.navbar svg {
  width: 22px;
  height: 22px;
}

/* timeline */
.timeline {
  display: flex;
  flex: none;
  height: 70px;
  border-top: 2px solid #d5d5d5;
  background: #f1f1f1;
}

.playback {
  display: flex;
  align-items: center;
  gap: 15px;
  width: 198px;
  padding: 6px 0 0 13px;
}

.playback svg {
  width: 20px;
  height: 20px;
}

.features {
  display: flex;
  flex: 1;
  padding-top: 20px;
}

.features li {
  position: relative;
  display: flex;
  flex: 1;
  justify-content: center;
  height: 37px;
  background:
    linear-gradient(#c8c8c8, #c8c8c8) center 28px / 3px 8px no-repeat,
    linear-gradient(#c8c8c8, #c8c8c8) 0 34px / 100% 3px no-repeat;
}

.features li:first-child {
  background: repeating-linear-gradient(90deg, #ccc 0 6px, transparent 6px 8px) 0 34px / 100% 3px no-repeat;
}

.features li:last-child {
  background-size: 3px 8px, 50% 3px;
}

.expand {
  position: absolute;
  top: 28px;
  width: 14px;
  height: 14px;
  border: 1px solid #445;
  border-radius: 3px;
  background: #c5cddd;
  color: #111;
  font-size: 14px;
  font-weight: bold;
  line-height: 12px;
}

.timeline-end {
  position: relative;
  width: 91px;
  padding: 25px 0 0 49px;
}

.hscroll {
  position: absolute;
  top: 0;
  right: 8px;
  width: 140px;
  height: 10px;
  border-radius: 5px;
  background: #c9c9c9;
}

.marker {
  position: absolute;
  left: -10px;
  top: 12px;
}
```
